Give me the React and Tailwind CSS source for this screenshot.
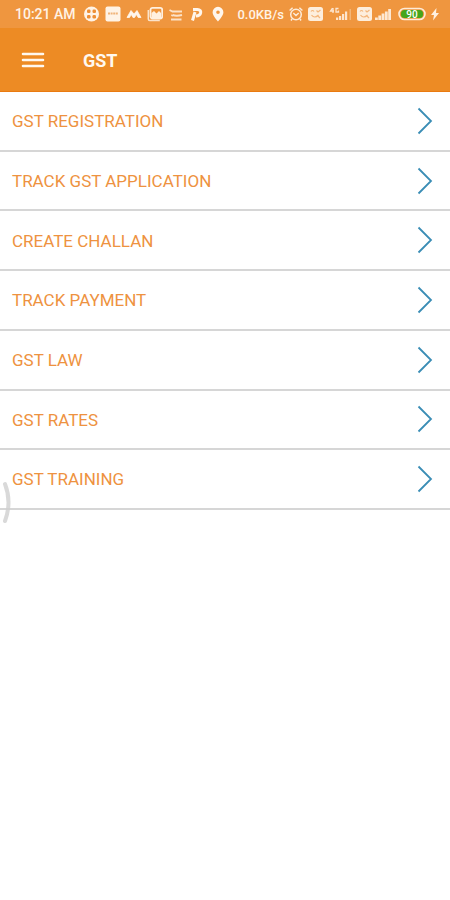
import { Fragment } from 'react';

const menuItems = [
  'GST REGISTRATION',
  'TRACK GST APPLICATION',
  'CREATE CHALLAN',
  'TRACK PAYMENT',
  'GST LAW',
  'GST RATES',
  'GST TRAINING',
];

function SimIcon() {
  return (
    <svg className="h-[14px] w-[15px]" viewBox="0 0 15 14" fill="none">
      <rect width="15" height="14" rx="2.5" fill="#fdeedd" />
      <path d="M3 4.500q1.500-2 3 0M8.500 3.500l1.500 1.500 2.500-2M3.500 8q3 4 7 0M10 9l2 2" stroke="#f3b67c" strokeWidth="1.200" />
    </svg>
  );
}

function NotificationIcons() {
  const icons = [
    // four-dot disc
    <Fragment key="disc">
      <circle cx="7.500" cy="8" r="7.500" fill="#fff3e6" />
      <g fill="#ee8f35">
        <rect x="3" y="3.500" width="3.500" height="3.500" rx="1.200" />
        <rect x="8.500" y="3.500" width="3.500" height="3.500" rx="1.200" />
        <rect x="3" y="9" width="3.500" height="3.500" rx="1.200" />
        <rect x="8.500" y="9" width="3.500" height="3.500" rx="1.200" />
      </g>
    </Fragment>,
    // square badge
    <Fragment key="badge">
      <rect x="0.500" y="0.500" width="15" height="15" rx="2" fill="#fff3e6" />
      <path d="M3 7.500h10" stroke="#f0b47a" strokeWidth="2" strokeDasharray="2 .6" />
    </Fragment>,
    // M mark
    <path key="m" d="M1 11.500L5 4.500l3 3.500 3-3.500 4 7h-2.800L10.500 8.500 8.500 11.500H7L5.300 8.500 3.500 11.500z" stroke="#fff6ec" strokeWidth=".8" strokeLinejoin="round" fill="#fff6ec" />,
    // gallery
    <Fragment key="gallery">
      <path d="M1.300 4v9q0 1.500 1.500 1.500h10" stroke="#fbe3cb" strokeWidth="1.500" fill="none" />
      <rect x="3.500" y="1.800" width="11.700" height="10.700" rx="2" stroke="#fff0e0" strokeWidth="1.800" fill="none" />
      <path d="M4.500 12V7l2.500-2 2.500 2.500L12 5l2 2v5z" fill="#fff0e0" />
    </Fragment>,
    // striped mark
    <path key="stripes" d="M1.500 4l3 1.500h9.500M4.500 9q4 1.500 9.500 0M3 13.500h10.500M4.500 9l-1 1" stroke="#fce2c8" strokeWidth="1.900" fill="none" />,
    // P mark
    <path key="p" d="M3.500 14.500L6 6M4 3.500h4.500c5 0 4 6.500-1.500 6.500" stroke="#fff6ec" strokeWidth="3" fill="none" />,
    // map pin
    <path key="pin" d="M8 .8a5.400 5.400 0 0 0-5.400 5.400c0 3.600 5.400 9.300 5.400 9.300s5.400-5.700 5.400-9.300A5.400 5.400 0 0 0 8 .8zm0 3.600a1.800 1.800 0 1 1 0 3.600 1.800 1.800 0 0 1 0-3.600z" fill="#fff6ec" fillRule="evenodd" />,
  ];

  return (
    <div className="flex gap-[5px]">
      {icons.map((icon) => (
        <svg key={icon.key} className="size-4" viewBox="0 0 16 16">
          {icon}
        </svg>
      ))}
    </div>
  );
}

function StatusBar() {
  return (
    <div className="flex h-7 items-center justify-between bg-[#ef963f] pr-[11px] pl-[15px] text-[#fff3e6]">
      <div className="flex items-center gap-2">
        <span className="pt-px text-[14px] font-medium whitespace-nowrap">10:21 AM</span>
        <NotificationIcons />
      </div>

      <div className="flex items-center gap-[5px]">
        <span className="pt-px text-[13px] font-medium whitespace-nowrap">0.0KB/s</span>
        {/* alarm */}
        <svg className="size-[14px]" viewBox="0 0 14 14" fill="none" stroke="#fdebd8">
          <circle cx="7" cy="7.500" r="5.300" strokeWidth="1.500" />
          <path d="M.6 3.500L3.600 .8M13.400 3.500L10.400 .8M4.300 6L7 8.500 9.700 6M3 12l-1 1.500M11 12l1 1.500" strokeWidth="1.500" />
        </svg>
        <SimIcon />
        {/* signal with 4G */}
        <svg className="h-[14px] w-6" viewBox="0 0 24 14" fill="#fde5ce">
          <path d="M8 10.500h2.200V13H8zM11 9h2.200v4H11zM14 7h2.200v6H14zM17 4.500h2.200V13H17z" />
          <path d="M21.500 2h1.500v11h-1.500z" opacity=".4" />
          <path d="M4.500 1L2.500 4h3.500M5 1v5M10.500 1.500h-2.500v3.500h2.500V3.500" stroke="#fde5ce" strokeWidth="1.300" fill="none" />
        </svg>
        <SimIcon />
        <svg className="h-[14px] w-4 overflow-visible" viewBox="0 0 16 14" fill="#fde8d3">
          <path d="M-2 10.500H.8V13H-2zM1.300 8.500h2.800V13H1.300zM4.600 6.500h2.800V13H4.600zM7.900 4.500h2.800V13H7.900zM11.200 2H14v11h-2.800z" />
        </svg>
        {/* battery */}
        <svg className="h-[14px] w-7" viewBox="0 0 28 14">
          <rect x="1" y="1.500" width="26" height="11" rx="5.500" fill="#ef963f" stroke="#fdebd8" strokeWidth="1.600" />
          <rect x="3" y="3" width="22" height="8" rx="3.500" fill="#45a51c" />
          <text x="14" y="10.500" textAnchor="middle" fontSize="10" fontWeight="500" fill="#fff">90</text>
        </svg>
        <svg className="h-[14px] w-2" viewBox="0 0 8 14" fill="#fff0e0">
          <path d="M5.500 1L0 8h3L2 13.500 8 6H5z" />
        </svg>
      </div>
    </div>
  );
}

export default function App() {
  return (
    <div className="relative min-h-screen bg-white font-['Roboto',sans-serif]">
      <StatusBar />

      <header className="flex h-16 items-center gap-[38px] border-b border-[#ea7a10] bg-[#ed8b24] pl-[21px]">
        <button type="button" aria-label="Open menu" className="cursor-pointer">
          <svg className="h-4 w-6" viewBox="0 0 24 16" stroke="#fff8ef" strokeWidth="2.600" strokeLinecap="round">
            <path d="M2 2h20M2 8h20M2 14h20" />
          </svg>
        </button>
        <h1 className="pt-0.5 text-[18px] font-bold text-[#fff8ef]">GST</h1>
      </header>

      <nav>
        <ul className="grid min-h-[418px] auto-rows-fr">
          {menuItems.map((item) => (
            <li key={item} className="border-b-2 border-[#d6d6d6]">
              <a href="#" className="flex h-full items-center justify-between pr-[17px] pl-3 text-[17px] text-[#ee9240]">
                <span className="pt-0.5">{item}</span>
                <svg className="h-7 w-4" viewBox="0 0 16 28" fill="none" stroke="#3a8db5" strokeWidth="1.800">
                  <path d="M1.500 1.500L14 14 1.500 26.500" />
                </svg>
              </a>
            </li>
          ))}
        </ul>
      </nav>

      {/* edge handle that floats over the list */}
      <svg className="absolute top-[480px] left-0 h-11 w-3" viewBox="0 0 12 44" fill="none">
        <path d="M5 4q7 18 0 37" stroke="#cfcfcf" strokeOpacity=".8" strokeWidth="4" strokeLinecap="round" />
      </svg>
    </div>
  );
}
